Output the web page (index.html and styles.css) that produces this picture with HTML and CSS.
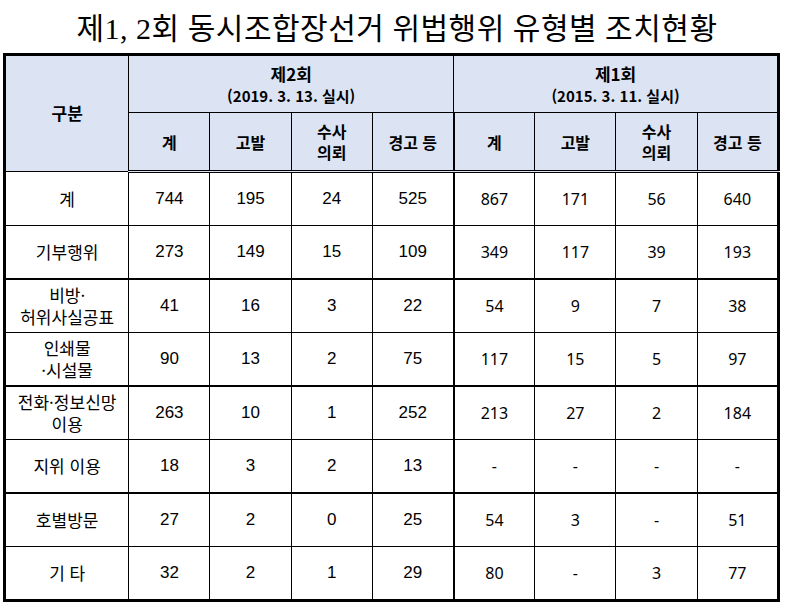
FILE: index.html
```html
<!DOCTYPE html>
<html lang="ko">
<head>
<meta charset="utf-8">
<link rel="stylesheet" href="styles.css">
</head>
<body>
<h1 class="title">제1, 2회 동시조합장선거 위법행위 유형별 조치현황</h1>
<table class="grid">
  <colgroup>
    <col class="c-label">
    <col class="c-num"><col class="c-num"><col class="c-num"><col class="c-num">
    <col class="c-num"><col class="c-num"><col class="c-num"><col class="c-num">
  </colgroup>
  <thead>
    <tr class="h1">
      <th rowspan="2" class="hl">구분</th>
      <th colspan="4" class="grp"><span class="ln">제2회</span><span class="ln sub">(2019. 3. 13. 실시)</span></th>
      <th colspan="4" class="grp"><span class="ln">제1회</span><span class="ln sub">(2015. 3. 11. 실시)</span></th>
    </tr>
    <tr class="h2">
      <th>계</th><th>고발</th><th class="two"><span class="ln">수사</span><span class="ln">의뢰</span></th><th class="sep">경고 등</th>
      <th>계</th><th>고발</th><th class="two"><span class="ln">수사</span><span class="ln">의뢰</span></th><th>경고 등</th>
    </tr>
  </thead>
  <tbody>
    <tr class="r">
      <td class="lab">계</td><td>744</td><td>195</td><td>24</td><td class="sep">525</td>
      <td class="b">867</td><td class="b">171</td><td class="b">56</td><td class="b">640</td>
    </tr>
    <tr class="r gb">
      <td class="lab">기부행위</td><td>273</td><td>149</td><td>15</td><td class="sep">109</td>
      <td class="b">349</td><td class="b">117</td><td class="b">39</td><td class="b">193</td>
    </tr>
    <tr class="r">
      <td class="lab two"><span class="ln">비방·</span><span class="ln">허위사실공표</span></td><td>41</td><td>16</td><td>3</td><td class="sep">22</td>
      <td class="b">54</td><td class="b">9</td><td class="b">7</td><td class="b">38</td>
    </tr>
    <tr class="r gb">
      <td class="lab two"><span class="ln">인쇄물</span><span class="ln">·시설물</span></td><td>90</td><td>13</td><td>2</td><td class="sep">75</td>
      <td class="b">117</td><td class="b">15</td><td class="b">5</td><td class="b">97</td>
    </tr>
    <tr class="r">
      <td class="lab two"><span class="ln">전화·정보신망</span><span class="ln">이용</span></td><td>263</td><td>10</td><td>1</td><td class="sep">252</td>
      <td class="b">213</td><td class="b">27</td><td class="b">2</td><td class="b">184</td>
    </tr>
    <tr class="r gb">
      <td class="lab">지위 이용</td><td>18</td><td>3</td><td>2</td><td class="sep">13</td>
      <td class="b">-</td><td class="b">-</td><td class="b">-</td><td class="b">-</td>
    </tr>
    <tr class="r">
      <td class="lab">호별방문</td><td>27</td><td>2</td><td>0</td><td class="sep">25</td>
      <td class="b">54</td><td class="b">3</td><td class="b">-</td><td class="b">51</td>
    </tr>
    <tr class="r">
      <td class="lab">기 타</td><td>32</td><td>2</td><td>1</td><td class="sep">29</td>
      <td class="b">80</td><td class="b">-</td><td class="b">3</td><td class="b">77</td>
    </tr>
  </tbody>
</table>
</body>
</html>
```
FILE: styles.css
```css
html, body {
  margin: 0;
  padding: 0;
  background: #ffffff;
}
body {
  font-family: "Noto Sans CJK KR", "Noto Sans", sans-serif;
  color: #000;
}
.title {
  margin: 0;
  height: 52px;
  display: flex;
  align-items: center;
  justify-content: center;
  font-family: "Liberation Serif", "Noto Sans CJK KR", serif;
  font-weight: 400;
  font-size: 30px;
  letter-spacing: 0.5px;
  padding-left: 6px;
}
.grid {
  margin-left: 3px;
  margin-top: 1px;
  border-collapse: collapse;
  table-layout: fixed;
  width: 777px;
  border: 3px solid #000;
}
.c-label { width: 124px; }
.c-num { width: 81px; }
.grid th, .grid td {
  border: 1px solid #000;
  text-align: center;
  vertical-align: middle;
  padding: 0;
}
.grid th {
  background: #dce4f4;
  font-weight: 700;
  font-size: 16px;
  line-height: 20px;
}
.ln {
  display: block;
  white-space: nowrap;
}
.h1 th { height: 55px; }
.h1 .grp { font-size: 17px; padding-top: 1px; }
.h1 .grp .ln { height: 22px; line-height: 22px; }
.h1 .sub { font-size: 15px; }
.h1 .hl { font-size: 17px; padding-bottom: 2px; }
.h2 th { height: 57px; border-bottom: 3px double #000; }
.h2 .two .ln { height: 21px; line-height: 21px; }
.grid .sep { border-right: 2px solid #000; }
.h1 .grp:first-of-type { border-right: 2px solid #000; }
.r td {
  height: 52px;
  font-family: "Liberation Sans", "Noto Sans CJK KR", sans-serif;
  font-size: 17px;
  line-height: 22px;
  font-weight: 400;
}
.r td.b {
  font-family: "Noto Sans", "Open Sans", sans-serif;
  font-weight: 400;
  font-size: 16px;
}
.r td.lab {
  font-family: "Noto Sans CJK KR", sans-serif;
  font-size: 17px;
  line-height: 22px;
}
.r td.lab .ln { height: 22px; }
.r.gb td { border-bottom: 2px solid #000; }
```
